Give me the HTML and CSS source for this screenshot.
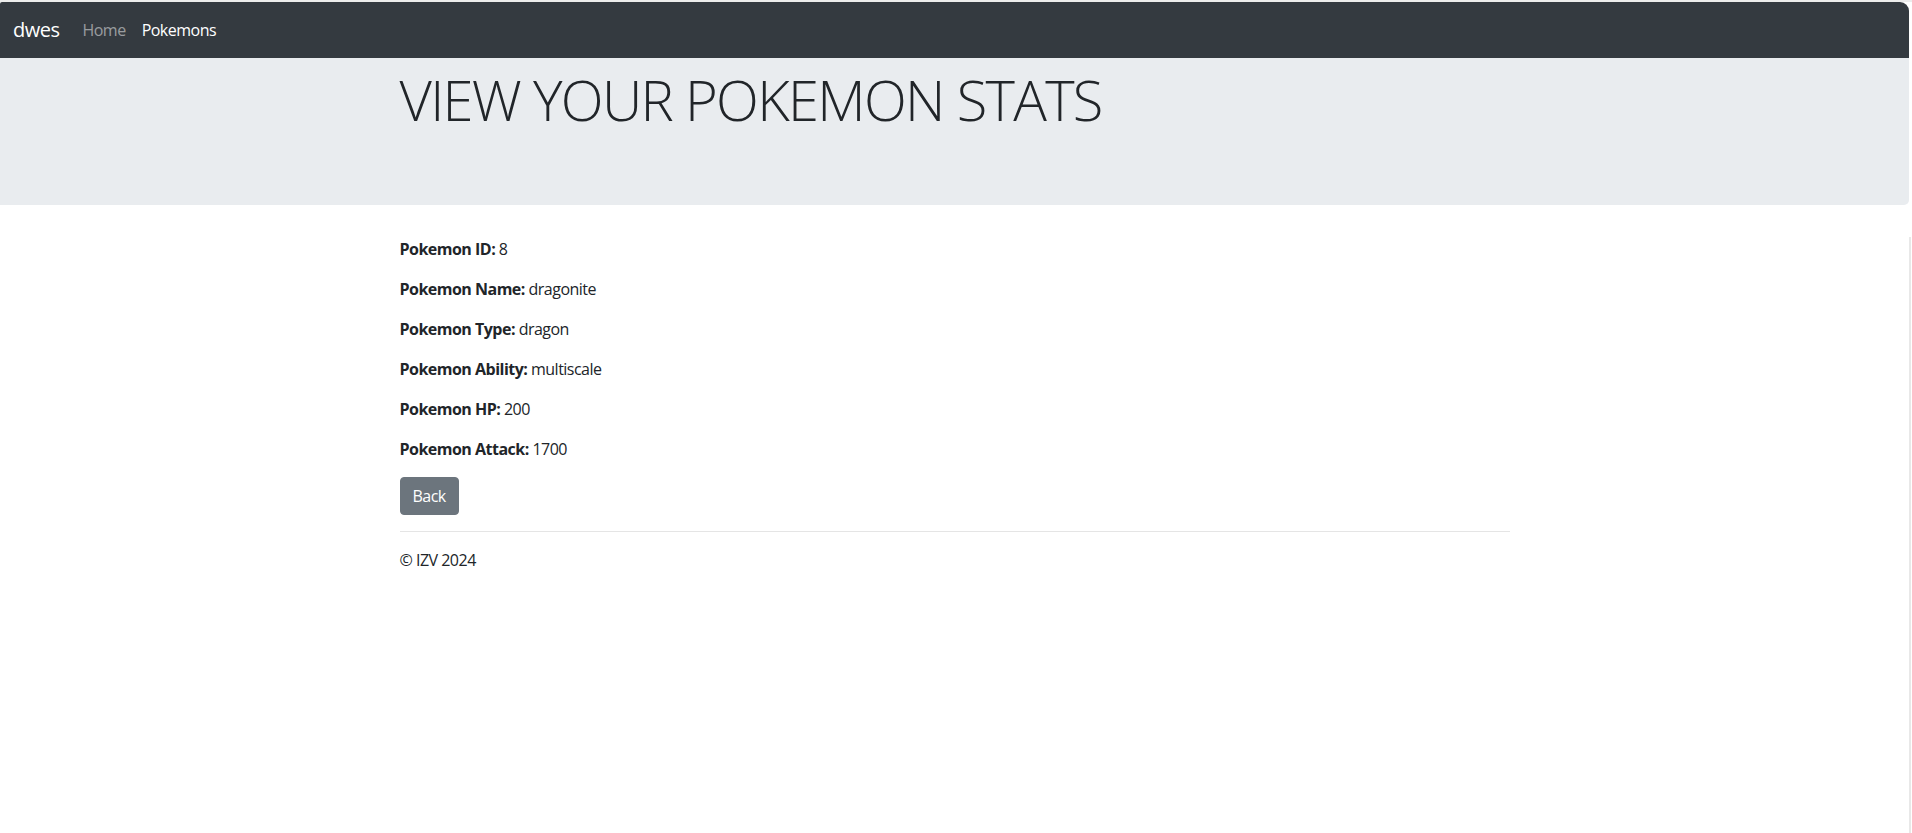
FILE: index.html
```html
<!DOCTYPE html>
<html lang="en">
<head>
<meta charset="utf-8">
<title>Pokemon stats</title>
<link rel="stylesheet" href="styles.css">
</head>
<body>
<div class="app">
  <nav class="navbar">
    <a class="brand" href="#">dwes</a>
    <ul class="nav">
      <li><a class="nav-link" href="#">Home</a></li>
      <li><a class="nav-link active" href="#">Pokemons</a></li>
    </ul>
  </nav>
  <header class="jumbotron">
    <div class="container">
      <h1 class="display">VIEW YOUR POKEMON STATS</h1>
    </div>
  </header>
  <main class="main">
    <div class="container">
      <p class="stat"><strong>Pokemon ID:</strong> 8</p>
      <p class="stat"><strong>Pokemon Name:</strong> dragonite</p>
      <p class="stat"><strong>Pokemon Type:</strong> dragon</p>
      <p class="stat"><strong>Pokemon Ability:</strong> multiscale</p>
      <p class="stat"><strong>Pokemon HP:</strong> 200</p>
      <p class="stat"><strong>Pokemon Attack:</strong> 1700</p>
      <a class="btn" href="#">Back</a>
      <hr class="divider">
      <footer class="footer"><p>&copy; IZV 2024</p></footer>
    </div>
  </main>
</div>
</body>
</html>
```
FILE: styles.css
```css
*, *::before, *::after {
  box-sizing: border-box;
}
html, body {
  height: 100%;
}
body {
  margin: 0;
  border-top: 2px solid #ececec;
  background: #fff;
  color: #212529;
  font-family: "Open Sans", "Noto Sans", sans-serif;
  font-size: 16px;
  line-height: 1.5;
  letter-spacing: -0.032em;
}
.app {
  display: flex;
  flex-direction: column;
  min-height: 100%;
  margin-right: 1px;
}
.navbar {
  display: flex;
  align-items: center;
  height: 56px;
  padding: 8px 16px 8px 13px;
  margin-right: 2px;
  background: #343a40;
  border-radius: 2px 9px 0 0;
}
.brand {
  color: #fff;
  text-decoration: none;
  font-size: 20px;
  line-height: 30px;
  margin-right: 15px;
}
.nav {
  display: flex;
  list-style: none;
  margin: 0;
  padding: 0;
}
.nav-link {
  display: block;
  padding: 8px;
  color: rgba(255, 255, 255, 0.5);
  text-decoration: none;
  font-size: 16px;
  line-height: 24px;
}
.nav-link.active {
  color: #fff;
}
.jumbotron {
  background: #e9ecef;
  margin-right: 2px;
  margin-bottom: 32px;
  padding: 8px 0 64px;
  border-radius: 0 0 5px 0;
}
.container {
  max-width: 1140px;
  margin: 0 auto;
  padding: 0 15px;
}
.display {
  margin: 0 0 8px;
  font-size: 56px;
  font-weight: 300;
  line-height: 1.2;
  color: #212529;
  letter-spacing: -0.03em;
}
.main {
  flex: 1;
  border-right: 2px solid #e8e8e8;
}
.stat {
  margin: 0 0 16px;
}
.stat strong {
  font-weight: 700;
}
.btn {
  display: inline-block;
  padding: 6px 12px;
  border: 1px solid #6c757d;
  border-radius: 4px;
  background: #6c757d;
  color: #fff;
  text-decoration: none;
  font-size: 16px;
  line-height: 24px;
}
.divider {
  margin: 16px 0;
  border: 0;
  border-top: 1px solid rgba(0, 0, 0, 0.1);
}
.footer p {
  margin: 0 0 16px;
}
```
